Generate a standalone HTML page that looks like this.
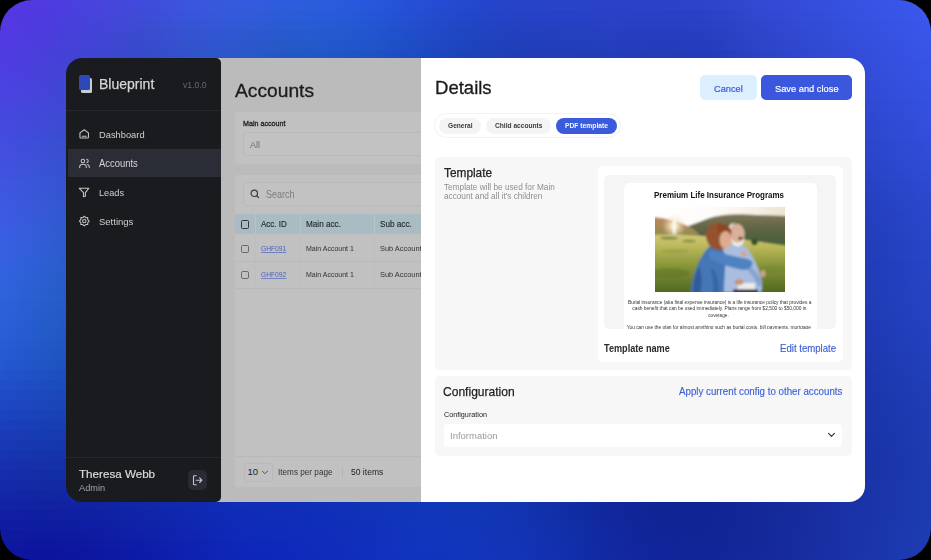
<!DOCTYPE html>
<html><head><meta charset="utf-8">
<style>
*{margin:0;padding:0;box-sizing:border-box}
html,body{width:931px;height:560px;overflow:hidden;background:#000;font-family:"Liberation Sans",sans-serif}
#bg{position:absolute;left:0;top:0;width:931px;height:560px;border-radius:32px;overflow:hidden}
#bgi{position:absolute;left:0;top:0;width:931px;height:560px}
.t{position:absolute;white-space:nowrap;line-height:1}
.r{position:absolute}
svg{position:absolute;overflow:visible}
</style></head>
<body>
<div id="bg"><div id="bgi"><div style="height:10px;background:linear-gradient(90deg,#5636e5 0px,#4f3be0 47px,#4843dc 94px,#404bda 141px,#3b55dd 188px,#355ade 235px,#2f5cdc 282px,#2a5cdd 329px,#2756da 376px,#244ed4 423px,#2447cd 470px,#2643c9 517px,#2943c9 564px,#2a42ca 611px,#2a42c8 658px,#2c43ca 705px,#3148d1 752px,#344cd9 799px,#3651e0 846px,#3955e8 893px,#3b59ee 931px)"></div><div style="height:10px;background:linear-gradient(90deg,#5537e4 0px,#4e3bde 47px,#4644da 94px,#3e4bd6 141px,#3954da 188px,#335ada 235px,#2c5cd7 282px,#285bd9 329px,#2555d6 376px,#234dd0 423px,#2246c9 470px,#2542c5 517px,#2741c6 564px,#2941c7 611px,#2840c5 658px,#2a41c6 705px,#3047ce 752px,#334bd6 799px,#3550de 846px,#3854e6 893px,#3b58ed 931px)"></div><div style="height:10px;background:linear-gradient(90deg,#5438e3 0px,#4d3cdd 47px,#4444d8 94px,#3c4bd3 141px,#3754d6 188px,#3159d6 235px,#2a5bd2 282px,#265bd5 329px,#2355d2 376px,#214ccc 423px,#2145c5 470px,#2341c1 517px,#2640c2 564px,#2840c4 611px,#273fc1 658px,#2840c3 705px,#2e45cb 752px,#324ad4 799px,#344fdc 846px,#3753e4 893px,#3a57eb 931px)"></div><div style="height:10px;background:linear-gradient(90deg,#5339e3 0px,#4b3ddb 47px,#4344d6 94px,#3a4acf 141px,#3553d2 188px,#2f58d1 235px,#2859cd 282px,#245ad0 329px,#2154ce 376px,#1f4bc8 423px,#2044c1 470px,#2240bd 517px,#253fbf 564px,#263fc0 611px,#253dbe 658px,#273ebf 705px,#2d44c9 752px,#3149d1 799px,#334eda 846px,#3652e2 893px,#3956ea 931px)"></div><div style="height:10px;background:linear-gradient(90deg,#513ae2 0px,#4a3edb 47px,#4145d4 94px,#384acc 141px,#3352ce 188px,#2d57cd 235px,#2658c8 282px,#2258cb 329px,#2053ca 376px,#1e4ac4 423px,#1e43bd 470px,#203fb9 517px,#233ebb 564px,#243ebd 611px,#243cbb 658px,#253dbc 705px,#2b43c6 752px,#3048cf 799px,#334dd8 846px,#3651e1 893px,#3955e8 931px)"></div><div style="height:10px;background:linear-gradient(90deg,#503ce2 0px,#483fda 47px,#3f45d2 94px,#364aca 141px,#3152ca 188px,#2b57c9 235px,#2457c4 282px,#2057c6 329px,#1e51c5 376px,#1d49c0 423px,#1d42ba 470px,#1f3eb6 517px,#223db8 564px,#233cb9 611px,#223bb7 658px,#233bb9 705px,#2a41c3 752px,#2e47cd 799px,#324cd6 846px,#3550e0 893px,#3854e7 931px)"></div><div style="height:10px;background:linear-gradient(90deg,#4f3de1 0px,#4741d9 47px,#3e46d0 94px,#354bc8 141px,#2f51c7 188px,#2956c5 235px,#2256c0 282px,#1e55c1 329px,#1d50c1 376px,#1b48bd 423px,#1c41b6 470px,#1e3db3 517px,#203cb5 564px,#213bb6 611px,#2139b5 658px,#223ab6 705px,#2840c0 752px,#2d46ca 799px,#314bd4 846px,#3450de 893px,#3753e5 931px)"></div><div style="height:10px;background:linear-gradient(90deg,#4d3fe1 0px,#4642d9 47px,#3c47cf 94px,#334bc6 141px,#2d51c4 188px,#2755c1 235px,#2055bd 282px,#1d54bd 329px,#1b4fbd 376px,#1a48b9 423px,#1b41b3 470px,#1c3cb0 517px,#1f3bb2 564px,#203ab3 611px,#1f38b2 658px,#2139b4 705px,#273fbe 752px,#2c44c8 799px,#304ad2 846px,#344fdd 893px,#3753e4 931px)"></div><div style="height:10px;background:linear-gradient(90deg,#4c41e1 0px,#4444d8 47px,#3b48ce 94px,#324cc4 141px,#2b51c1 188px,#2554be 235px,#1f54ba 282px,#1b53ba 329px,#1a4eb9 376px,#1947b6 423px,#1940b0 470px,#1b3cad 517px,#1d3aaf 564px,#1e39b0 611px,#1e37af 658px,#2039b2 705px,#263ebb 752px,#2b43c6 799px,#2f49d0 846px,#334edb 893px,#3652e3 931px)"></div><div style="height:10px;background:linear-gradient(90deg,#4b43e1 0px,#4345d7 47px,#3949cd 94px,#314cc3 141px,#2a50be 188px,#2353bb 235px,#1d53b7 282px,#1a51b6 329px,#184db6 376px,#1846b2 423px,#183fae 470px,#1a3bab 517px,#1c39ac 564px,#1d38ad 611px,#1d37ad 658px,#1f38b0 705px,#243db9 752px,#2942c4 799px,#2e48cf 846px,#324dd9 893px,#3551e1 931px)"></div><div style="height:10px;background:linear-gradient(90deg,#4945e0 0px,#4147d7 47px,#384acc 94px,#2f4dc2 141px,#2850bc 188px,#2253b8 235px,#1c52b4 282px,#1950b3 329px,#174cb3 376px,#1745b0 423px,#173fab 470px,#193aa9 517px,#1b38a9 564px,#1c37aa 611px,#1c36ab 658px,#1e37ae 705px,#233cb7 752px,#2841c2 799px,#2d47cd 846px,#314cd8 893px,#3450df 931px)"></div><div style="height:10px;background:linear-gradient(90deg,#4847e0 0px,#4049d6 47px,#374bcb 94px,#2e4ec1 141px,#2750ba 188px,#2052b6 235px,#1b51b2 282px,#184fb1 329px,#164bb0 376px,#1644ad 423px,#163ea9 470px,#183aa7 517px,#1a37a7 564px,#1b36a8 611px,#1b35a9 658px,#1d36ad 705px,#223bb5 752px,#2740c0 799px,#2c46cb 846px,#304bd6 893px,#3350de 931px)"></div><div style="height:10px;background:linear-gradient(90deg,#4749e0 0px,#3f4ad5 47px,#364cca 94px,#2d4ec0 141px,#2650b9 188px,#1f51b4 235px,#1a51b0 282px,#174eae 329px,#154aad 376px,#1544aa 423px,#153ea7 470px,#1739a5 517px,#1837a5 564px,#1935a6 611px,#1a34a7 658px,#1d36ab 705px,#213ab3 752px,#263fbe 799px,#2b45c9 846px,#2f4bd4 893px,#334fdc 931px)"></div><div style="height:10px;background:linear-gradient(90deg,#454be0 0px,#3d4cd5 47px,#344dc9 94px,#2c4fbf 141px,#2450b7 188px,#1e51b2 235px,#1950ae 282px,#164dac 329px,#1449ab 376px,#1443a8 423px,#143da5 470px,#1639a3 517px,#1736a3 564px,#1834a3 611px,#1934a5 658px,#1c35a9 705px,#2039b1 752px,#253ebc 799px,#2a44c7 846px,#2e4ad3 893px,#324edb 931px)"></div><div style="height:10px;background:linear-gradient(90deg,#444de0 0px,#3c4ed5 47px,#334fc9 94px,#2b50be 141px,#2350b6 188px,#1d51b0 235px,#184fac 282px,#154caa 329px,#1348a9 376px,#1342a6 423px,#143da3 470px,#1538a1 517px,#1635a1 564px,#1734a2 611px,#1933a3 658px,#1b34a8 705px,#1f38b0 752px,#243dba 799px,#2943c5 846px,#2d49d1 893px,#314dd9 931px)"></div><div style="height:10px;background:linear-gradient(90deg,#434fe0 0px,#3b50d4 47px,#3250c8 94px,#2a50bd 141px,#2251b5 188px,#1c50af 235px,#174fab 282px,#144ca8 329px,#1347a7 376px,#1242a4 423px,#133ca1 470px,#14389f 517px,#15359f 564px,#1733a0 611px,#1832a2 658px,#1a34a6 705px,#1e37ae 752px,#233cb8 799px,#2842c3 846px,#2c48cf 893px,#304dd7 931px)"></div><div style="height:10px;background:linear-gradient(90deg,#4251e0 0px,#3a51d4 47px,#3151c8 94px,#2951bd 141px,#2151b4 188px,#1b50ae 235px,#164ea9 282px,#134ba7 329px,#1246a5 376px,#1241a2 423px,#123ca0 470px,#13379e 517px,#15349e 564px,#16329e 611px,#1732a0 658px,#1a33a5 705px,#1d37ad 752px,#223cb6 799px,#2741c1 846px,#2b47cd 893px,#2f4cd5 931px)"></div><div style="height:10px;background:linear-gradient(90deg,#4153e1 0px,#3953d5 47px,#3052c7 94px,#2752bc 141px,#2051b3 188px,#1a4fad 235px,#164da8 282px,#134aa6 329px,#1146a3 376px,#1140a1 423px,#113b9e 470px,#13379d 517px,#14349c 564px,#15329d 611px,#17319f 658px,#1933a4 705px,#1d36ab 752px,#213bb5 799px,#2540c0 846px,#2a46cb 893px,#2d4bd3 931px)"></div><div style="height:10px;background:linear-gradient(90deg,#4055e1 0px,#3855d5 47px,#2f54c7 94px,#2652bb 141px,#1f51b2 188px,#1a4fac 235px,#154da7 282px,#1249a4 329px,#1145a2 376px,#1040a0 423px,#113b9d 470px,#12369b 517px,#13339b 564px,#14319c 611px,#16319e 658px,#1832a2 705px,#1c35aa 752px,#203ab3 799px,#243fbe 846px,#2945c9 893px,#2c4ad1 931px)"></div><div style="height:10px;background:linear-gradient(90deg,#3f57e2 0px,#3756d5 47px,#2e55c7 94px,#2553bb 141px,#1e51b1 188px,#194fab 235px,#154ca6 282px,#1249a3 329px,#1044a1 376px,#103f9f 423px,#103a9c 470px,#11369a 517px,#12339a 564px,#14319a 611px,#15309d 658px,#1832a1 705px,#1b35a8 752px,#1f39b2 799px,#233ebc 846px,#2844c7 893px,#2b49d0 931px)"></div><div style="height:10px;background:linear-gradient(90deg,#3e59e2 0px,#3658d5 47px,#2d56c6 94px,#2453ba 141px,#1e51b1 188px,#184eaa 235px,#144ca6 282px,#1148a3 329px,#1044a0 376px,#0f3f9e 423px,#103a9b 470px,#113699 517px,#123299 564px,#133099 611px,#15309b 658px,#1731a0 705px,#1a34a7 752px,#1e38b0 799px,#223eba 846px,#2743c5 893px,#2a48ce 931px)"></div><div style="height:10px;background:linear-gradient(90deg,#3d5ae3 0px,#3559d5 47px,#2b57c6 94px,#2354b9 141px,#1d51b0 188px,#174eaa 235px,#134ba5 282px,#1147a2 329px,#0f439f 376px,#0f3e9d 423px,#0f3a9b 470px,#103599 517px,#113298 564px,#133098 611px,#142f9a 658px,#17309f 705px,#1a33a6 752px,#1e38af 799px,#213db9 846px,#2642c3 893px,#2947cc 931px)"></div><div style="height:10px;background:linear-gradient(90deg,#3c5ce3 0px,#335bd5 47px,#2a57c5 94px,#2254b9 141px,#1c51b0 188px,#174ea9 235px,#134aa5 282px,#1047a1 329px,#0f439f 376px,#0f3e9c 423px,#0f399a 470px,#103598 517px,#113297 564px,#123097 611px,#142f9a 658px,#16309e 705px,#1933a5 752px,#1d37ad 799px,#213cb7 846px,#2542c2 893px,#2947cb 931px)"></div><div style="height:10px;background:linear-gradient(90deg,#3a5ee3 0px,#325cd4 47px,#2958c4 94px,#2154b8 141px,#1b51af 188px,#164da9 235px,#134aa4 282px,#1046a1 329px,#0f429e 376px,#0e3d9c 423px,#0f399a 470px,#0f3598 517px,#103196 564px,#122f97 611px,#132e99 658px,#162f9d 705px,#1932a4 752px,#1c36ac 799px,#203bb6 846px,#2441c0 893px,#2846c9 931px)"></div><div style="height:10px;background:linear-gradient(90deg,#385fe2 0px,#305dd3 47px,#2758c4 94px,#2054b8 141px,#1a50af 188px,#164da9 235px,#1249a4 282px,#1046a1 329px,#0e419e 376px,#0e3d9c 423px,#0e3899 470px,#0f3497 517px,#103196 564px,#112f96 611px,#132e98 658px,#152f9c 705px,#1832a3 752px,#1c36ab 799px,#1f3bb5 846px,#2340bf 893px,#2745c8 931px)"></div><div style="height:10px;background:linear-gradient(90deg,#3660e2 0px,#2e5ed2 47px,#2659c3 94px,#1f54b7 141px,#1a50ae 188px,#154ca8 235px,#1249a4 282px,#0f45a1 329px,#0e419e 376px,#0e3d9c 423px,#0e3899 470px,#0f3497 517px,#103195 564px,#112e95 611px,#132e97 658px,#152e9b 705px,#1831a2 752px,#1b35aa 799px,#1f3ab4 846px,#2340be 893px,#2745c7 931px)"></div><div style="height:10px;background:linear-gradient(90deg,#3461e1 0px,#2c5ed1 47px,#2559c1 94px,#1e54b6 141px,#194fae 188px,#154ca8 235px,#1148a4 282px,#0f44a1 329px,#0e409e 376px,#0e3c9c 423px,#0e3899 470px,#0e3497 517px,#0f3095 564px,#112e95 611px,#122d96 658px,#142e9a 705px,#1731a1 752px,#1b35a9 799px,#1e3ab3 846px,#223fbd 893px,#2644c6 931px)"></div><div style="height:10px;background:linear-gradient(90deg,#3262e0 0px,#2a5ecf 47px,#2359c0 94px,#1d53b6 141px,#184fae 188px,#144ba8 235px,#1147a4 282px,#0f44a1 329px,#0e409e 376px,#0e3c9c 423px,#0e3899 470px,#0e3397 517px,#0f3095 564px,#102e94 611px,#122d96 658px,#142e9a 705px,#1730a0 752px,#1a34a8 799px,#1e39b2 846px,#223fbd 893px,#2644c5 931px)"></div><div style="height:10px;background:linear-gradient(90deg,#3162df 0px,#295ece 47px,#2258bf 94px,#1c53b5 141px,#184ead 188px,#144aa8 235px,#1147a4 282px,#0f43a1 329px,#0e3f9f 376px,#0d3b9c 423px,#0e3799 470px,#0e3397 517px,#0f3095 564px,#102d94 611px,#122c95 658px,#142d99 705px,#16309f 752px,#1a34a7 799px,#1e39b1 846px,#223fbc 893px,#2544c5 931px)"></div><div style="height:10px;background:linear-gradient(90deg,#2f62dd 0px,#275ecc 47px,#2158be 94px,#1c52b4 141px,#174ead 188px,#1349a8 235px,#1146a4 282px,#0f42a2 329px,#0e3f9f 376px,#0d3b9c 423px,#0d379a 470px,#0e3397 517px,#0f2f95 564px,#102d94 611px,#112c95 658px,#132d98 705px,#162f9e 752px,#1933a6 799px,#1d38b0 846px,#223fbc 893px,#2543c4 931px)"></div><div style="height:10px;background:linear-gradient(90deg,#2d61dc 0px,#265dca 47px,#2057bd 94px,#1b51b4 141px,#164dad 188px,#1349a8 235px,#1045a5 282px,#0f42a2 329px,#0e3ea0 376px,#0d3b9d 423px,#0d379a 470px,#0e3397 517px,#0f2f95 564px,#102d93 611px,#112b94 658px,#132c98 705px,#162e9d 752px,#1933a6 799px,#1d38b0 846px,#223ebb 893px,#2543c3 931px)"></div><div style="height:10px;background:linear-gradient(90deg,#2c60da 0px,#245cc9 47px,#1f56bc 94px,#1a50b3 141px,#164cad 188px,#1348a8 235px,#1044a5 282px,#0e41a3 329px,#0e3ea0 376px,#0d3a9e 423px,#0d369b 470px,#0e3398 517px,#0f2f95 564px,#102c93 611px,#112b94 658px,#132c97 705px,#162e9d 752px,#1932a5 799px,#1d37af 846px,#213eba 893px,#2442c2 931px)"></div><div style="height:10px;background:linear-gradient(90deg,#2a5fd8 0px,#235bc9 47px,#1e55bb 94px,#194fb3 141px,#154bad 188px,#1247a9 235px,#1043a6 282px,#0e40a3 329px,#0e3da1 376px,#0d3a9e 423px,#0d369b 470px,#0e3298 517px,#0e2f95 564px,#0f2c93 611px,#112b94 658px,#132b96 705px,#152d9c 752px,#1832a4 799px,#1c37ae 846px,#213db9 893px,#2442c1 931px)"></div><div style="height:10px;background:linear-gradient(90deg,#295ed7 0px,#225ac8 47px,#1d53bb 94px,#184eb2 141px,#1549ad 188px,#1246a9 235px,#1042a6 282px,#0e40a4 329px,#0e3da2 376px,#0d3a9f 423px,#0e369c 470px,#0e3299 517px,#0e2f95 564px,#0f2c93 611px,#112a93 658px,#122b96 705px,#152d9b 752px,#1831a3 799px,#1c36ad 846px,#203cb8 893px,#2341bf 931px)"></div><div style="height:10px;background:linear-gradient(90deg,#285cd5 0px,#2158c7 47px,#1c52ba 94px,#184cb2 141px,#1448ac 188px,#1244a9 235px,#1041a7 282px,#0e3fa5 329px,#0e3ca3 376px,#0d39a0 423px,#0e369d 470px,#0e3299 517px,#0e2e96 564px,#0f2b93 611px,#102a93 658px,#122a95 705px,#152c9b 752px,#1831a2 799px,#1c36ac 846px,#203cb6 893px,#2341be 931px)"></div><div style="height:10px;background:linear-gradient(90deg,#265ad3 0px,#2056c5 47px,#1b50b9 94px,#174bb1 141px,#1447ac 188px,#1143aa 235px,#1040a7 282px,#0e3ea6 329px,#0e3ca4 376px,#0e39a1 423px,#0e369e 470px,#0e329a 517px,#0e2e96 564px,#0f2b93 611px,#102993 658px,#122a95 705px,#152c9a 752px,#1830a2 799px,#1b35ab 846px,#1f3bb5 893px,#2240bd 931px)"></div><div style="height:10px;background:linear-gradient(90deg,#2457d0 0px,#1f54c4 47px,#1a4eb8 94px,#1649b0 141px,#1445ac 188px,#1142aa 235px,#0f3fa8 282px,#0e3da7 329px,#0e3ba5 376px,#0e39a2 423px,#0e369f 470px,#0e329b 517px,#0f2e96 564px,#0f2b93 611px,#102992 658px,#122995 705px,#142c99 752px,#1730a1 799px,#1b35aa 846px,#1f3bb4 893px,#223fbb 931px)"></div><div style="height:10px;background:linear-gradient(90deg,#2353cd 0px,#1e50c2 47px,#194bb6 94px,#1647b0 141px,#1343ac 188px,#1141aa 235px,#0f3ea9 282px,#0e3ca8 329px,#0e3ba6 376px,#0e38a4 423px,#0e36a0 470px,#0e329c 517px,#0f2e97 564px,#0f2a93 611px,#102892 658px,#122994 705px,#142b99 752px,#172fa0 799px,#1a34a9 846px,#1e3ab2 893px,#213fba 931px)"></div><div style="height:10px;background:linear-gradient(90deg,#214fca 0px,#1c4dbf 47px,#1849b5 94px,#1545af 141px,#1342ac 188px,#113fab 235px,#0f3daa 282px,#0e3ca9 329px,#0e3aa7 376px,#0e38a5 423px,#0e36a1 470px,#0e329d 517px,#0f2e98 564px,#0f2a94 611px,#102892 658px,#122894 705px,#142b98 752px,#172f9f 799px,#1a34a8 846px,#1e39b1 893px,#203eb9 931px)"></div><div style="height:10px;background:linear-gradient(90deg,#1f4bc7 0px,#1b49bd 47px,#1846b3 94px,#1543af 141px,#1240ac 188px,#113eac 235px,#0f3cab 282px,#0e3baa 329px,#0e3aa8 376px,#0e38a6 423px,#0e35a3 470px,#0f329e 517px,#0f2d98 564px,#0f2a94 611px,#102892 658px,#122894 705px,#142a98 752px,#172e9f 799px,#1a33a7 846px,#1d39b0 893px,#203db7 931px)"></div><div style="height:10px;background:linear-gradient(90deg,#1e47c4 0px,#1a46ba 47px,#1743b2 94px,#1440ae 141px,#123ead 188px,#103cac 235px,#0f3bac 282px,#0e3aab 329px,#0e39aa 376px,#0e38a8 423px,#0f35a4 470px,#0f329f 517px,#0f2d99 564px,#0f2994 611px,#102792 658px,#122793 705px,#142a98 752px,#162e9e 799px,#1933a6 846px,#1d38af 893px,#1f3db6 931px)"></div><div style="height:10px;background:linear-gradient(90deg,#1c43c0 0px,#1942b7 47px,#1640b0 94px,#143ead 141px,#123cad 188px,#103bad 235px,#0f3aad 282px,#0f39ac 329px,#0e38ab 376px,#0f38a9 423px,#0f35a6 470px,#0f32a0 517px,#0f2d9a 564px,#0f2995 611px,#102792 658px,#122793 705px,#142997 752px,#162d9e 799px,#1932a5 846px,#1c38ae 893px,#1f3cb5 931px)"></div><div style="height:10px;background:linear-gradient(90deg,#1b3fbd 0px,#183eb4 47px,#153dae 94px,#133bac 141px,#123aad 188px,#1039ad 235px,#0f38ae 282px,#0f38ad 329px,#0f38ad 376px,#0f37ab 423px,#0f36a7 470px,#0f32a2 517px,#0f2d9b 564px,#0f2995 611px,#102692 658px,#112693 705px,#132997 752px,#162d9d 799px,#1932a5 846px,#1c37ad 893px,#1f3cb4 931px)"></div><div style="height:10px;background:linear-gradient(90deg,#1a3bb9 0px,#173bb1 47px,#153aac 94px,#1339ac 141px,#1138ad 188px,#1038ae 235px,#0f37af 282px,#0f37ae 329px,#0f37ae 376px,#0f37ad 423px,#0f36a9 470px,#0f32a3 517px,#0f2d9c 564px,#102895 611px,#102692 658px,#112693 705px,#132897 752px,#162d9d 799px,#1932a4 846px,#1b37ac 893px,#1e3cb3 931px)"></div><div style="height:10px;background:linear-gradient(90deg,#1938b6 0px,#1637ae 47px,#1437ab 94px,#1236ab 141px,#1136ad 188px,#1036af 235px,#0f36b0 282px,#0f36b0 329px,#0f37af 376px,#0f37ae 423px,#1036ab 470px,#1032a5 517px,#102d9d 564px,#102896 611px,#102592 658px,#112693 705px,#132896 752px,#162c9d 799px,#1831a4 846px,#1b37ab 893px,#1e3bb2 931px)"></div><div style="height:10px;background:linear-gradient(90deg,#1834b2 0px,#1534ab 47px,#1333a9 94px,#1234aa 141px,#1134ad 188px,#1034b0 235px,#0f34b1 282px,#0f35b1 329px,#0f36b1 376px,#1037b0 423px,#1036ad 470px,#1032a6 517px,#102d9e 564px,#102896 611px,#102592 658px,#112593 705px,#132896 752px,#162c9c 799px,#1831a3 846px,#1b36ab 893px,#1d3bb2 931px)"></div><div style="height:10px;background:linear-gradient(90deg,#1730af 0px,#1530a8 47px,#1330a7 94px,#1231aa 141px,#1132ae 188px,#1033b1 235px,#0f33b2 282px,#0f34b2 329px,#0f36b2 376px,#1037b2 423px,#1036ae 470px,#1033a8 517px,#102d9f 564px,#102897 611px,#102593 658px,#112593 705px,#132796 752px,#162c9c 799px,#1831a3 846px,#1b36ab 893px,#1d3bb1 931px)"></div><div style="height:10px;background:linear-gradient(90deg,#162dac 0px,#142da6 47px,#122da6 94px,#112ea9 141px,#1030ae 188px,#1031b2 235px,#0f32b3 282px,#0f33b3 329px,#0f35b4 376px,#1037b3 423px,#1036b0 470px,#1033aa 517px,#102da1 564px,#102798 611px,#102493 658px,#112493 705px,#132797 752px,#162c9c 799px,#1831a3 846px,#1b36aa 893px,#1d3bb1 931px)"></div><div style="height:10px;background:linear-gradient(90deg,#1429aa 0px,#1329a4 47px,#112aa5 94px,#112ca9 141px,#102eae 188px,#0f30b3 235px,#0f30b4 282px,#0f32b4 329px,#0f35b5 376px,#1037b5 423px,#1136b2 470px,#1133ac 517px,#102da2 564px,#102798 611px,#102494 658px,#112493 705px,#132797 752px,#162c9d 799px,#1831a4 846px,#1b37ab 893px,#1d3bb1 931px)"></div><div style="height:10px;background:linear-gradient(90deg,#1326a8 0px,#1226a2 47px,#1127a4 94px,#1029a8 141px,#102caf 188px,#0f2eb4 235px,#0f2fb5 282px,#0f31b5 329px,#1034b7 376px,#1036b7 423px,#1136b4 470px,#1133ad 517px,#112ea3 564px,#102799 611px,#102494 658px,#112494 705px,#132797 752px,#162c9d 799px,#1831a4 846px,#1b37ab 893px,#1d3bb1 931px)"></div><div style="height:10px;background:linear-gradient(90deg,#1223a6 0px,#1022a1 47px,#1024a3 94px,#1027a8 141px,#102aaf 188px,#0f2db5 235px,#0f2eb6 282px,#0f30b7 329px,#1033b8 376px,#1136b8 423px,#1137b6 470px,#1134af 517px,#112ea5 564px,#10279a 611px,#102495 658px,#112494 705px,#132797 752px,#162c9d 799px,#1931a4 846px,#1b37ab 893px,#1d3bb1 931px)"></div><div style="height:10px;background:linear-gradient(90deg,#111fa4 0px,#0f1fa0 47px,#0f21a2 94px,#0f24a8 141px,#0f28af 188px,#0f2bb6 235px,#0f2db7 282px,#0f2fb8 329px,#1033b9 376px,#1136ba 423px,#1137b8 470px,#1134b1 517px,#112ea7 564px,#10279b 611px,#112496 658px,#112495 705px,#132798 752px,#162c9e 799px,#1932a5 846px,#1b37ac 893px,#1d3bb1 931px)"></div><div style="height:10px;background:linear-gradient(90deg,#101ca3 0px,#0e1c9f 47px,#0e1ea2 94px,#0f22a8 141px,#0f26b0 188px,#0f2ab7 235px,#0e2cb8 282px,#0f2eb9 329px,#1032ba 376px,#1136bb 423px,#1236b9 470px,#1234b3 517px,#112fa9 564px,#11289d 611px,#112497 658px,#112495 705px,#142799 752px,#162c9e 799px,#1932a5 846px,#1c37ac 893px,#1d3bb2 931px)"></div><div style="height:10px;background:linear-gradient(90deg,#0f19a1 0px,#0d199e 47px,#0e1ca1 94px,#0f20a8 141px,#0f24b0 188px,#0f29b8 235px,#0e2bb9 282px,#0f2dba 329px,#1031bc 376px,#1135bd 423px,#1236ba 470px,#1234b4 517px,#112fab 564px,#11289f 611px,#112498 658px,#122496 705px,#142799 752px,#162c9f 799px,#1932a6 846px,#1c38ad 893px,#1d3bb2 931px)"></div><div style="height:10px;background:linear-gradient(90deg,#0e17a0 0px,#0c169e 47px,#0d19a1 94px,#0e1da8 141px,#0e22b0 188px,#0e27b8 235px,#0e2aba 282px,#0f2cbb 329px,#1031bd 376px,#1135be 423px,#1236bb 470px,#1234b5 517px,#122fac 564px,#1128a1 611px,#11249a 658px,#122497 705px,#14279a 752px,#162c9f 799px,#1932a6 846px,#1c38ad 893px,#1e3bb2 931px)"></div><div style="height:10px;background:linear-gradient(90deg,#0d149f 0px,#0c149d 47px,#0c17a1 94px,#0e1ba8 141px,#0e21b0 188px,#0e26b8 235px,#0e28bb 282px,#0f2cbc 329px,#1030bd 376px,#1134be 423px,#1235bc 470px,#1234b7 517px,#122fae 564px,#1129a2 611px,#11259b 658px,#122499 705px,#14279b 752px,#172ca0 799px,#1a32a7 846px,#1c38ae 893px,#1e3bb2 931px)"></div></div></div>
<div class="r" style="left:214.00px;top:58.00px;width:207.00px;height:444.00px;background:#bbbbbb;"></div>
<div class="r" style="left:65.60px;top:58.00px;width:155.40px;height:444.00px;background:#1a1b1f;border-radius:16px 5px 5px 16px;"></div>
<div class="r" style="left:66.00px;top:110.00px;width:155.00px;height:1.00px;background:#26272c;"></div>
<div class="r" style="left:68.00px;top:149.00px;width:153.00px;height:28.00px;background:#2a2d35;"></div>
<div class="r" style="left:66.00px;top:457.00px;width:155.00px;height:1.00px;background:#26272c;"></div>
<div class="r" style="left:80.80px;top:78.30px;width:11.30px;height:15.10px;background:#c3cdd5;border-radius:1.5px;"></div>
<div class="r" style="left:78.80px;top:75.30px;width:11.10px;height:14.70px;background:#2f48b8;border-radius:1.5px;"></div>
<div class="t" style="left:98.60px;top:77.00px;font-size:14.24px;color:#d6d6d6;font-weight:400;transform:scaleX(0.9839);transform-origin:left center;-webkit-text-stroke:0.25px #d6d6d6;">Blueprint</div>
<div class="t" style="left:182.80px;top:80.00px;font-size:9.59px;color:#66686c;font-weight:400;transform:scaleX(0.9034);transform-origin:left center;">v1.0.0</div>
<div class="t" style="left:98.60px;top:130.00px;font-size:9.74px;color:#cfcfcf;font-weight:400;transform:scaleX(0.9570);transform-origin:left center;">Dashboard</div>
<div class="t" style="left:99.00px;top:159.00px;font-size:10.03px;color:#d6d6d6;font-weight:400;transform:scaleX(0.9429);transform-origin:left center;">Accounts</div>
<div class="t" style="left:99.00px;top:188.00px;font-size:9.74px;color:#cfcfcf;font-weight:400;transform:scaleX(0.9421);transform-origin:left center;">Leads</div>
<div class="t" style="left:99.00px;top:217.00px;font-size:9.74px;color:#cfcfcf;font-weight:400;transform:scaleX(0.9746);transform-origin:left center;">Settings</div>
<div class="t" style="left:79.20px;top:469.00px;font-size:11.19px;color:#dadada;font-weight:400;transform:scaleX(1.0398);transform-origin:left center;-webkit-text-stroke:0.2px #dadada;">Theresa Webb</div>
<div class="t" style="left:79.20px;top:483.00px;font-size:9.45px;color:#9ea4ab;font-weight:400;transform:scaleX(0.9744);transform-origin:left center;">Admin</div>
<div class="r" style="left:187.80px;top:470.30px;width:19.70px;height:19.60px;background:#282b34;border-radius:5px;"></div>
<div class="t" style="left:234.80px;top:82.00px;font-size:18.46px;color:#1c1c1c;font-weight:400;transform:scaleX(1.0417);transform-origin:left center;-webkit-text-stroke:0.3px #1c1c1c;">Accounts</div>
<div class="r" style="left:234.80px;top:111.80px;width:195.20px;height:52.60px;background:#c1c1c1;border-radius:3px;"></div>
<div class="t" style="left:243.30px;top:120.00px;font-size:7.27px;color:#222;font-weight:400;transform:scaleX(0.9829);transform-origin:left center;-webkit-text-stroke:0.3px #222;">Main account</div>
<div class="r" style="left:243.30px;top:132.20px;width:186.70px;height:24.10px;background:#c2c2c2;border-radius:4px;border:1px solid #b9b9b9;"></div>
<div class="t" style="left:250.20px;top:140.00px;font-size:9.74px;color:#707070;font-weight:400;transform:scaleX(0.9146);transform-origin:left center;">All</div>
<div class="r" style="left:234.80px;top:174.80px;width:195.20px;height:312.50px;background:#c1c1c1;border-radius:3px;"></div>
<div class="r" style="left:243.30px;top:182.30px;width:186.70px;height:24.10px;background:#c2c2c2;border-radius:4px;border:1px solid #b9b9b9;"></div>
<div class="t" style="left:265.60px;top:190.00px;font-size:10.03px;color:#7b7b7b;font-weight:400;transform:scaleX(0.8936);transform-origin:left center;">Search</div>
<div class="r" style="left:235.00px;top:214.00px;width:195.00px;height:20.40px;background:#a9bbc3;"></div>
<div class="r" style="left:255.10px;top:214.00px;width:1.00px;height:20.40px;background:#b6c3c9;"></div>
<div class="r" style="left:255.10px;top:234.40px;width:1.00px;height:53.70px;background:#bdbdbd;"></div>
<div class="r" style="left:299.50px;top:214.00px;width:1.00px;height:20.40px;background:#b6c3c9;"></div>
<div class="r" style="left:299.50px;top:234.40px;width:1.00px;height:53.70px;background:#bdbdbd;"></div>
<div class="r" style="left:374.30px;top:214.00px;width:1.00px;height:20.40px;background:#b6c3c9;"></div>
<div class="r" style="left:374.30px;top:234.40px;width:1.00px;height:53.70px;background:#bdbdbd;"></div>
<div class="r" style="left:235.00px;top:261.30px;width:195.00px;height:1.00px;background:#b9b9b9;"></div>
<div class="r" style="left:235.00px;top:288.10px;width:195.00px;height:1.00px;background:#b9b9b9;"></div>
<div class="t" style="left:261.10px;top:220.00px;font-size:8.87px;color:#252b30;font-weight:400;transform:scaleX(0.9026);transform-origin:left center;-webkit-text-stroke:0.15px #252b30;">Acc. ID</div>
<div class="t" style="left:305.70px;top:220.00px;font-size:8.87px;color:#252b30;font-weight:400;transform:scaleX(0.9221);transform-origin:left center;-webkit-text-stroke:0.15px #252b30;">Main acc.</div>
<div class="t" style="left:380.30px;top:220.00px;font-size:8.87px;color:#252b30;font-weight:400;transform:scaleX(0.9214);transform-origin:left center;-webkit-text-stroke:0.15px #252b30;">Sub acc.</div>
<div class="t" style="left:260.90px;top:245.00px;font-size:7.56px;color:#4d5fb8;font-weight:400;transform:scaleX(0.8855);transform-origin:left center;text-decoration:underline;text-decoration-color:#7080c0;">GHF091</div>
<div class="t" style="left:305.70px;top:245.00px;font-size:7.85px;color:#333;font-weight:400;transform:scaleX(0.8924);transform-origin:left center;">Main Account 1</div>
<div class="t" style="left:380.30px;top:245.00px;font-size:7.85px;color:#333;font-weight:400;transform:scaleX(0.9461);transform-origin:left center;">Sub Account 1</div>
<div class="t" style="left:260.90px;top:271.00px;font-size:7.56px;color:#4d5fb8;font-weight:400;transform:scaleX(0.8855);transform-origin:left center;text-decoration:underline;text-decoration-color:#7080c0;">GHF092</div>
<div class="t" style="left:305.70px;top:271.00px;font-size:7.85px;color:#333;font-weight:400;transform:scaleX(0.8924);transform-origin:left center;">Main Account 1</div>
<div class="t" style="left:380.30px;top:271.00px;font-size:7.85px;color:#333;font-weight:400;transform:scaleX(0.9461);transform-origin:left center;">Sub Account 1</div>
<div class="r" style="left:240.70px;top:220.40px;width:8.20px;height:8.30px;background:transparent;border-radius:1.5px;border:1px solid #333;"></div>
<div class="r" style="left:240.70px;top:244.50px;width:8.20px;height:8.30px;background:transparent;border-radius:1.8px;border:1px solid #6a6a6a;"></div>
<div class="r" style="left:240.70px;top:270.80px;width:8.20px;height:8.30px;background:transparent;border-radius:1.8px;border:1px solid #6a6a6a;"></div>
<div class="r" style="left:235.00px;top:456.00px;width:195.00px;height:1.00px;background:#b9b9b9;"></div>
<div class="r" style="left:243.50px;top:463.20px;width:29.70px;height:18.40px;background:transparent;border-radius:3px;border:1px solid #b9b9b9;"></div>
<div class="t" style="left:247.50px;top:467.00px;font-size:9.59px;color:#222;font-weight:400;">10</div>
<div class="t" style="left:278.40px;top:468.00px;font-size:8.87px;color:#333;font-weight:400;transform:scaleX(0.9228);transform-origin:left center;">Items per page</div>
<div class="r" style="left:342.30px;top:468.40px;width:1.00px;height:8.90px;background:#b3b3b3;"></div>
<div class="t" style="left:350.90px;top:467.00px;font-size:9.59px;color:#1f1f1f;font-weight:400;transform:scaleX(0.8912);transform-origin:left center;">50 items</div>
<div class="r" style="left:421.00px;top:58.00px;width:444.40px;height:444.00px;background:#ffffff;border-radius:0 16px 16px 0;"></div>
<div class="t" style="left:435.30px;top:80.00px;font-size:17.88px;color:#1b1b1b;font-weight:400;transform:scaleX(1.0375);transform-origin:left center;-webkit-text-stroke:0.3px #1b1b1b;">Details</div>
<div class="r" style="left:700.10px;top:75.40px;width:57.00px;height:24.60px;background:#dcefff;border-radius:5px;"></div>
<div class="t" style="left:713.80px;top:84.00px;font-size:9.88px;color:#3d5ad6;font-weight:400;transform:scaleX(0.9364);transform-origin:left center;-webkit-text-stroke:0.2px #3d5ad6;">Cancel</div>
<div class="r" style="left:761.20px;top:75.40px;width:90.80px;height:24.60px;background:#3a57de;border-radius:5px;"></div>
<div class="t" style="left:774.70px;top:84.00px;font-size:9.88px;color:#ffffff;font-weight:400;transform:scaleX(0.9414);transform-origin:left center;-webkit-text-stroke:0.2px #ffffff;">Save and close</div>
<div class="r" style="left:434.40px;top:113.40px;width:186.40px;height:25.10px;background:#fff;border-radius:13px;border:1px solid #f2f2f2;"></div>
<div class="r" style="left:438.90px;top:117.50px;width:42.50px;height:16.80px;background:#f4f4f4;border-radius:9px;"></div>
<div class="t" style="left:447.60px;top:122.00px;font-size:7.85px;color:#3a3a3a;font-weight:700;transform:scaleX(0.8415);transform-origin:left center;">General</div>
<div class="r" style="left:486.20px;top:117.50px;width:64.90px;height:16.80px;background:#f4f4f4;border-radius:9px;"></div>
<div class="t" style="left:494.70px;top:122.00px;font-size:7.85px;color:#3a3a3a;font-weight:700;transform:scaleX(0.8442);transform-origin:left center;">Child accounts</div>
<div class="r" style="left:555.90px;top:117.50px;width:60.90px;height:16.80px;background:#3a5bdc;border-radius:9px;"></div>
<div class="t" style="left:564.80px;top:122.00px;font-size:7.85px;color:#f4f6ff;font-weight:700;transform:scaleX(0.8592);transform-origin:left center;">PDF template</div>
<div class="r" style="left:434.50px;top:157.00px;width:417.00px;height:213.20px;background:#f7f7f7;border-radius:5px;"></div>
<div class="t" style="left:443.90px;top:167.00px;font-size:12.35px;color:#222;font-weight:400;transform:scaleX(0.9599);transform-origin:left center;-webkit-text-stroke:0.25px #222;">Template</div>
<div class="t" style="left:443.90px;top:183.00px;font-size:8.43px;color:#8e8e8e;font-weight:400;transform:scaleX(0.9780);transform-origin:left center;">Template will be used for Main</div>
<div class="t" style="left:443.90px;top:192.00px;font-size:8.43px;color:#8e8e8e;font-weight:400;transform:scaleX(0.9757);transform-origin:left center;">account and all it's children</div>
<div class="r" style="left:597.90px;top:165.70px;width:245.60px;height:196.00px;background:#ffffff;border-radius:5px;"></div>
<div class="r" style="left:604.10px;top:174.60px;width:232.10px;height:154.10px;background:#f5f5f5;border-radius:5px;"></div>
<div class="r" style="left:624.40px;top:183.00px;width:192.20px;height:145.70px;background:#ffffff;border-radius:5px 5px 0 0;"></div>
<div class="t" style="left:653.90px;top:191.00px;font-size:9.16px;color:#111;font-weight:700;transform:scaleX(0.8723);transform-origin:left center;">Premium Life Insurance Programs</div>
<svg style="left:655px;top:207px" width="130" height="85" viewBox="0 0 130 85">
<defs>
<clipPath id="pc"><rect x="0" y="0" width="130" height="85"/></clipPath>
<linearGradient id="sky" x1="0" y1="0" x2="1" y2="0"><stop offset="0" stop-color="#ffffff"/><stop offset="0.45" stop-color="#fdfcf9"/><stop offset="0.75" stop-color="#f6f1e6"/><stop offset="1" stop-color="#ebe2cc"/></linearGradient>
<radialGradient id="sun" cx="19" cy="19" r="12" gradientUnits="userSpaceOnUse"><stop offset="0" stop-color="#fffef6"/><stop offset="0.3" stop-color="#fbefd0" stop-opacity="0.8"/><stop offset="1" stop-color="#f0d8a0" stop-opacity="0"/></radialGradient>
<linearGradient id="field" x1="0" y1="0" x2="0" y2="1"><stop offset="0" stop-color="#d2c878"/><stop offset="0.2" stop-color="#bab85a"/><stop offset="0.5" stop-color="#8a963a"/><stop offset="1" stop-color="#4a6420"/></linearGradient>
<linearGradient id="lh" x1="0" y1="0" x2="0" y2="1"><stop offset="0" stop-color="#c08660"/><stop offset="0.45" stop-color="#a88a58"/><stop offset="1" stop-color="#7e8a44"/></linearGradient>
<linearGradient id="rh" x1="0" y1="0" x2="0" y2="1"><stop offset="0" stop-color="#807658"/><stop offset="0.35" stop-color="#5e6644"/><stop offset="1" stop-color="#3e5834"/></linearGradient>
<filter id="bl" x="-10%" y="-10%" width="120%" height="120%"><feGaussianBlur stdDeviation="1"/></filter>
</defs>
<g clip-path="url(#pc)"><g filter="url(#bl)">
<rect x="-3" y="-3" width="136" height="91" fill="url(#sky)"/>
<path d="M28 21 C40 17 50 12 60 9.5 C72 7 82 6.8 92 7.5 C105 8 118 8.5 133 9 V48 H28 Z" fill="url(#rh)"/>
<path d="M-3 10 C8 10.5 16 13 24 15.5 C30 17.5 34 19 38 22 C41 24 43 26 45 29 V34 H-3 Z" fill="url(#lh)"/>
<path d="M-3 28 C15 27.5 35 28 55 29.5 C80 31 100 34 133 39 V88 H-3 Z" fill="url(#field)"/>
<ellipse cx="14" cy="31" rx="9" ry="1.6" fill="#6a7a38" opacity="0.8"/>
<ellipse cx="34" cy="34" rx="7" ry="1.4" fill="#6a7a38" opacity="0.7"/>
<ellipse cx="20" cy="44" rx="14" ry="2" fill="#7a8c38" opacity="0.3"/>
<ellipse cx="15" cy="66" rx="20" ry="5" fill="#5a7228" opacity="0.45"/>
<ellipse cx="118" cy="62" rx="14" ry="4" fill="#6a8030" opacity="0.3"/>
<circle cx="99.4" cy="35" r="3.2" fill="#35502a"/>
<circle cx="19" cy="19" r="12" fill="url(#sun)"/>
<path d="M18 13 L20.5 13 L20.8 27 L17.8 27 Z" fill="#ffffff" opacity="0.8"/>
<!-- man shirt -->
<path d="M68 40 C75 36 86 36 92 41 C97 48 101 56 104 64 C107 72 108 80 106 85 H68 C67 70 66 52 68 40 Z" fill="#a8bde0"/>
<path d="M92 57 C98 61 104 67 107 74 C108 78 106 80 103 79 C100 72 96 66 91 62 Z" fill="#8aa4d0"/>
<path d="M83 76 H100 V83 H83 Z" fill="#ecebe8"/>
<path d="M78 82.5 H103 V86 H78 Z" fill="#2a3140"/>
<!-- man head -->
<ellipse cx="81.5" cy="27" rx="8.2" ry="10.5" fill="#d9b09a"/>
<path d="M73.5 24 C73 19 76 16 80 15.8 C76.5 18 75 21 75.5 26 Z" fill="#ece6e0"/>
<path d="M75.5 30 C78 36.5 85 38 89.5 31 C89 36.5 86.5 39.5 82.5 39.5 C78.5 39.5 76 35.5 75.5 30 Z" fill="#efebe6"/>
<ellipse cx="85.5" cy="31.2" rx="2.2" ry="1.5" fill="#5a2e28"/>
<!-- woman jacket body -->
<path d="M55 39 C49 44 43 55 40 65 C37 73 36 81 36 86 H69 C69 76 70 62 71 50 C69 42 63 36 55 39 Z" fill="#4576b6"/>
<path d="M44 60 C47 66 47 76 45 86 H38 C38 76 40 66 44 60 Z" fill="#2c5692" opacity="0.8"/>
<path d="M58 62 C62 68 64 76 64 86 H58 C59 78 58 70 56 64 Z" fill="#2f5a96" opacity="0.6"/>
<!-- arm across -->
<path d="M53 43 C64 45 76 49 88 51 C93 52 97 53 97.5 55.5 C97.5 60 94 63 88 63 C76 61 64 56 55 52 Z" fill="#4f82c2"/>
<!-- woman hair & face -->
<path d="M51 30 C50 21 56 15.5 64 15.7 C71 16 75 19.5 76.5 24 C76 33 73 40 67 43 C59 45 52 38 51 30 Z" fill="#94522f"/>
<ellipse cx="70.5" cy="33" rx="6" ry="9" fill="#ddac8e"/>
<path d="M62 18 C68 16.5 74.5 19 76.5 24.5 C72 23.5 67 24 63 26 Z" fill="#8a4628"/>
<!-- hands -->
<ellipse cx="89" cy="47" rx="3" ry="2.8" fill="#d6a48a"/>
<ellipse cx="84" cy="75" rx="4.5" ry="3" fill="#c89478"/>
<ellipse cx="108" cy="66.5" rx="2.5" ry="3.5" fill="#d0a088"/>
</g></g>
</svg>
<div class="t" style="left:620.04px;top:300.00px;font-size:5.23px;color:#333;font-weight:400;transform:scaleX(0.9203);transform-origin:center center;">Burial insurance (aka final expense insurance) is a life insurance policy that provides a</div>
<div class="t" style="left:624.66px;top:306.00px;font-size:5.23px;color:#333;font-weight:400;transform:scaleX(0.9224);transform-origin:center center;">cash benefit that can be used immediately. Plans range from $2,500 to $50,000 in</div>
<div class="t" style="left:707.37px;top:313.00px;font-size:5.23px;color:#333;font-weight:400;transform:scaleX(0.8925);transform-origin:center center;">coverage.</div>
<div class="t" style="left:618.94px;top:325.00px;font-size:5.23px;color:#333;font-weight:400;transform:scaleX(0.9225);transform-origin:center center;">You can use the plan for almost anything such as burial costs, bill payments, mortgage</div>
<div class="r" style="left:610.00px;top:328.60px;width:220.00px;height:7.40px;background:#ffffff;"></div>
<div class="t" style="left:604.40px;top:344.00px;font-size:10.17px;color:#2a2a2a;font-weight:700;transform:scaleX(0.8992);transform-origin:left center;">Template name</div>
<div class="t" style="left:779.50px;top:344.00px;font-size:10.17px;color:#3d5fd6;font-weight:400;transform:scaleX(0.9468);transform-origin:left center;-webkit-text-stroke:0.15px #3d5fd6;">Edit template</div>
<div class="r" style="left:434.50px;top:375.80px;width:417.20px;height:80.40px;background:#f7f7f7;border-radius:5px;"></div>
<div class="t" style="left:442.80px;top:386.00px;font-size:12.94px;color:#1e1e1e;font-weight:400;transform:scaleX(0.9315);transform-origin:left center;-webkit-text-stroke:0.25px #1e1e1e;">Configuration</div>
<div class="t" style="left:678.70px;top:387.00px;font-size:10.47px;color:#3d5fd6;font-weight:400;transform:scaleX(0.9297);transform-origin:left center;-webkit-text-stroke:0.15px #3d5fd6;">Apply current config to other accounts</div>
<div class="t" style="left:443.50px;top:411.00px;font-size:6.98px;color:#222;font-weight:400;transform:scaleX(1.0357);transform-origin:left center;">Configuration</div>
<div class="r" style="left:443.70px;top:424.10px;width:398.50px;height:22.80px;background:#ffffff;border-radius:4px;"></div>
<div class="t" style="left:449.70px;top:431.00px;font-size:9.45px;color:#9b9b9b;font-weight:400;transform:scaleX(1.0069);transform-origin:left center;">Information</div>
<svg style="left:76px;top:126px" width="16" height="16" viewBox="0 0 16 16" fill="none"><path d="M3.95 6.9 L8.2 3.7 L12.45 6.9 V11.3 Q12.45 12.05 11.7 12.05 H4.7 Q3.95 12.05 3.95 11.3 Z" stroke="#c4c4c4" stroke-width="1.1" stroke-linejoin="round"/><path d="M6.3 10.3 H10.2" stroke="#c4c4c4" stroke-width="1.1" stroke-linecap="round"/></svg>
<svg style="left:76px;top:155px" width="16" height="16" viewBox="0 0 16 16" fill="none"><circle cx="6.9" cy="6" r="1.75" stroke="#c4c4c4" stroke-width="1.1"/><path d="M10.4 4.2 A1.8 1.8 0 0 1 10.4 7.8" stroke="#c4c4c4" stroke-width="1.1"/><path d="M3.7 12.6 V12 C3.7 10.3 5 9.3 7 9.3 C9 9.3 10.3 10.3 10.3 12 V12.6" stroke="#c4c4c4" stroke-width="1.1" stroke-linecap="round"/><path d="M11.7 9.6 C12.7 10 13.3 11 13.3 12.6" stroke="#c4c4c4" stroke-width="1.1" stroke-linecap="round"/></svg>
<svg style="left:76px;top:184px" width="16" height="16" viewBox="0 0 16 16" fill="none"><path d="M3.3 4.3 H12.7 L9.4 8.6 V12.3 L7.5 12.6 V8.6 Z" stroke="#c4c4c4" stroke-width="1.1" stroke-linejoin="round"/></svg>
<svg style="left:76px;top:213px" width="16" height="16" viewBox="0 0 16 16" fill="none"><path d="M8.30 3.20 L9.72 4.68 L11.76 4.64 L11.72 6.68 L13.20 8.10 L11.72 9.52 L11.76 11.56 L9.72 11.52 L8.30 13.00 L6.88 11.52 L4.84 11.56 L4.88 9.52 L3.40 8.10 L4.88 6.68 L4.84 4.64 L6.88 4.68 Z" stroke="#c4c4c4" stroke-width="1.05" stroke-linejoin="round"/><circle cx="8.3" cy="8.1" r="1.7" stroke="#c4c4c4" stroke-width="1.05"/></svg>
<svg style="left:186px;top:468px" width="24" height="24" viewBox="0 0 24 24" fill="none"><path d="M10.3 7.7 H8.2 C7.7 7.7 7.5 8 7.5 8.4 V16.1 C7.5 16.5 7.7 16.8 8.2 16.8 H10.3" stroke="#c8c8c8" stroke-width="1.1" stroke-linecap="round"/><path d="M10.2 12.2 H15.8 M13.6 9.9 L15.9 12.2 L13.6 14.5" stroke="#c8c8c8" stroke-width="1.1" stroke-linecap="round" stroke-linejoin="round"/></svg>
<svg style="left:246px;top:186px" width="16" height="16" viewBox="0 0 16 16" fill="none"><circle cx="8.3" cy="7.3" r="3.2" stroke="#3a3a3a" stroke-width="1.2"/><path d="M10.7 9.8 L12.5 11.5" stroke="#3a3a3a" stroke-width="1.2" stroke-linecap="round"/></svg>
<svg style="left:258px;top:464px" width="16" height="16" viewBox="0 0 16 16" fill="none"><path d="M4.3 7.3 L6.9 9.6 L9.6 7.3" stroke="#5a5a5a" stroke-width="1" stroke-linecap="round" stroke-linejoin="round"/></svg>
<svg style="left:822px;top:427px" width="18" height="18" viewBox="0 0 18 18" fill="none"><path d="M6.6 6.4 L9.5 9.3 L12.4 6.4" stroke="#333" stroke-width="1.2" stroke-linecap="round" stroke-linejoin="round"/></svg>

</body></html>
